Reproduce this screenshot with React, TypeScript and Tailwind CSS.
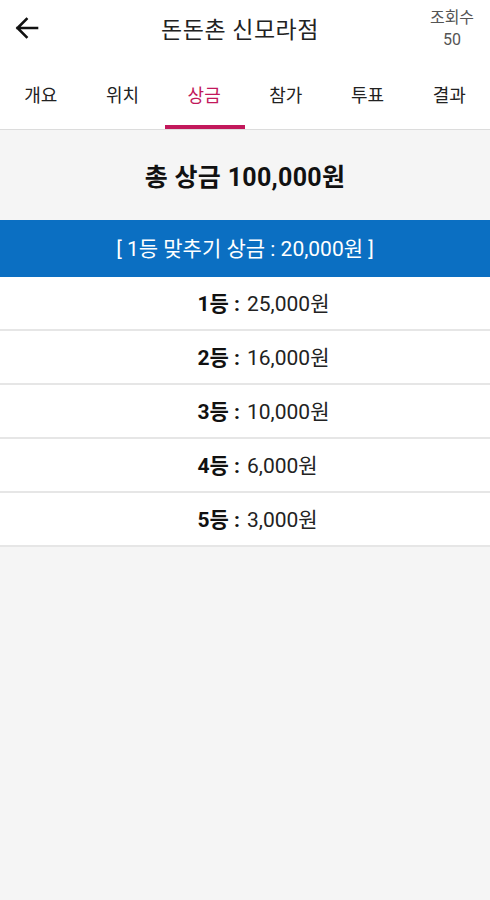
import React from "react";

const tabs = ["개요", "위치", "상금", "참가", "투표", "결과"];
const prizes = [
  ["1등", "25,000원"],
  ["2등", "16,000원"],
  ["3등", "10,000원"],
  ["4등", "6,000원"],
  ["5등", "3,000원"],
];

export default function App() {
  return (
    <div
      className="w-[490px] h-[900px] bg-[#f5f5f5] flex flex-col text-[#222]"
      style={{ fontFamily: 'Roboto, "Noto Sans CJK KR", sans-serif' }}
    >
      <div className="bg-white">
        <div className="h-[60px] flex items-center relative">
          <div className="w-[60px] h-[60px] relative shrink-0">
            <svg width="60" height="60" viewBox="0 0 60 60" className="absolute left-0 top-0">
              <path d="M37 28H17.5M26.5 19L17.5 28L26.5 37" fill="none" stroke="#111" strokeWidth="2.6" strokeLinecap="square" />
            </svg>
          </div>
          <div className="flex-1 text-center text-[23px] tracking-[0.5px] text-[#222] leading-none mt-[1px] pr-[10px]">돈돈촌 신모라점</div>
          <div className="w-[60px] shrink-0 flex flex-col items-center text-[16px] leading-[22px] text-[#555] pr-[16px] mb-[2px]">
            <span className="whitespace-nowrap">조회수</span>
            <span>50</span>
          </div>
        </div>
        <div className="h-[70px] flex border-b border-[#dcdcdc]">
          {tabs.map((t, i) => (
            <div key={t} className="flex-1 relative flex items-center justify-center">
              <span className={`text-[18px] ${i === 2 ? "text-[#c2185b]" : "text-[#222]"} mt-[2px]`}>{t}</span>
              {i === 2 && <div className="absolute left-[2px] right-0 bottom-0 h-[4px] bg-[#c2185b]" />}
            </div>
          ))}
        </div>
      </div>
      <div className="h-[90px] flex items-center justify-center text-[25px] tracking-[0.3px] font-bold text-[#111] pt-[6px]">
        총 상금 100,000원
      </div>
      <div className="h-[57px] bg-[#0b6fc2] flex items-center justify-center text-white text-[21px] pt-[2px]">
        [ 1등 맞추기 상금 : 20,000원 ]
      </div>
      {prizes.map(([r, v]) => (
        <div
          key={r}
          className="h-[54px] bg-white border-b-2 border-[#e6e6e6] flex items-center text-[21px] text-[#222] pt-[4px]"
        >
          <div className="w-[245px] text-right pr-[5px] font-bold text-[#111]">{r} :</div>
          <div className="flex-1 pl-[2px]">{v}</div>
        </div>
      ))}
    </div>
  );
}
